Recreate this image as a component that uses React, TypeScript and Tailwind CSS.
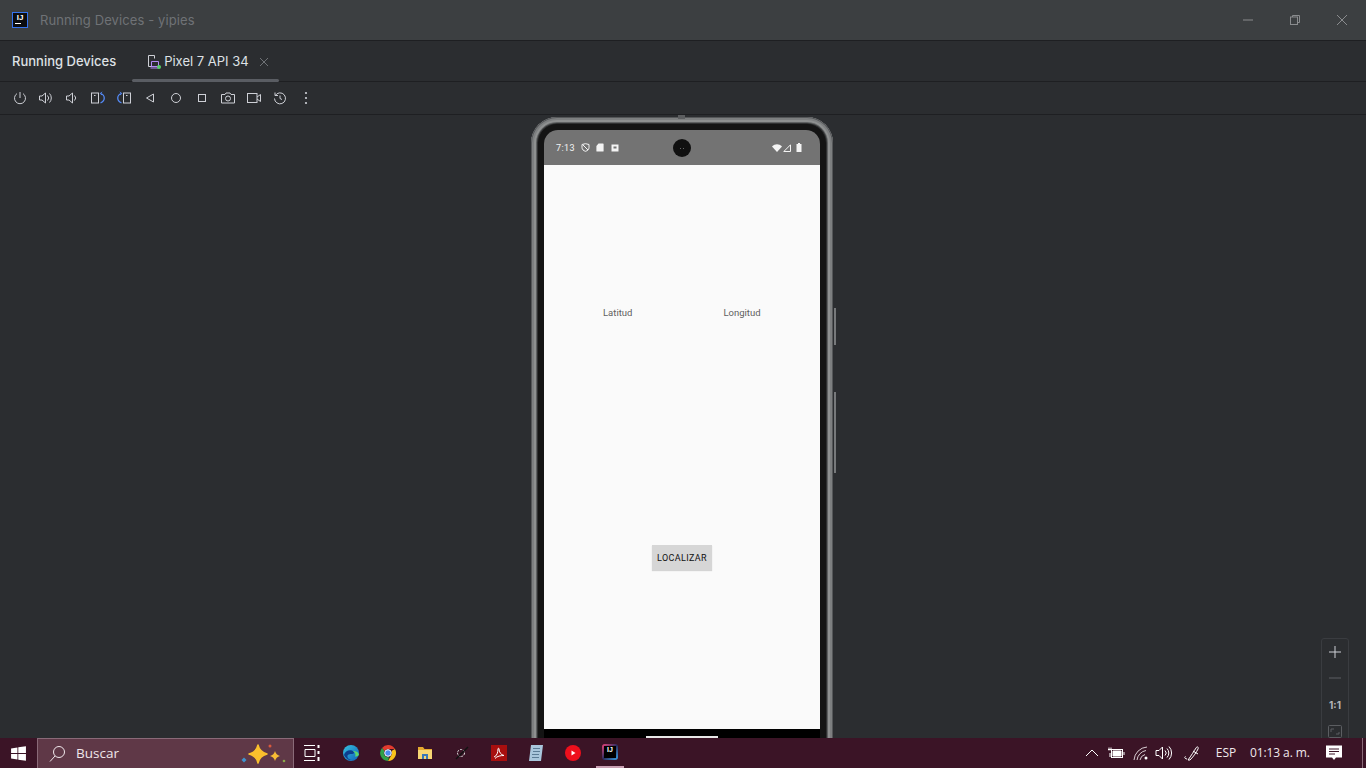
import React from "react";

const Ic = ({ children, w = 16, h = 16, c = "#ced0d6" }: { children: React.ReactNode; w?: number; h?: number; c?: string }) => (
  <svg width={w} height={h} viewBox={`0 0 ${w} ${h}`} fill="none" stroke={c} strokeWidth="1" className="shrink-0">
    {children}
  </svg>
);

const toolbar: React.ReactNode[] = [
  <Ic key="p"><path d="M8 2v6" /><path d="M5 3.600A5.500 5.500 0 1 0 11 3.600" /></Ic>,
  <Ic key="vu"><path d="M1.500 6h2.500L7.500 3v10L4 10H1.500z" /><path d="M9.500 5.500a3.500 3.500 0 0 1 0 5" /><path d="M11.500 3.500a6.500 6.500 0 0 1 0 9" /></Ic>,
  <Ic key="vd"><path d="M2.500 6h2.500L8.500 3v10L5 10H2.500z" /><path d="M10.500 5.500a3.500 3.500 0 0 1 0 5" /></Ic>,
  <Ic key="rl"><rect x="1.500" y="3" width="7" height="10" /><path d="M4 5.500h1.500" /><path d="M10.500 3.500c5 1.500 5 7.500 0 9.500" stroke="#548af7" strokeWidth="1.300" /><path d="M12 1.800 10.300 3.500 12 5" stroke="#548af7" /></Ic>,
  <Ic key="rr"><rect x="7.500" y="3" width="7" height="10" /><path d="M10 5.500h1.500" /><path d="M5.500 3.500c-5 1.500-5 7.500 0 9.500" stroke="#548af7" strokeWidth="1.300" /><path d="M4 1.800 5.700 3.500 4 5" stroke="#548af7" /></Ic>,
  <Ic key="b"><path d="M11.500 4v8L4.500 8z" /></Ic>,
  <Ic key="h"><circle cx="8" cy="8" r="4.500" /></Ic>,
  <Ic key="s"><rect x="4.500" y="4.500" width="7" height="7" /></Ic>,
  <Ic key="cam"><path d="M1.500 4.500h3.500l1-1.500h4l1 1.500h3.500v8.500h-13z" /><circle cx="8" cy="8.500" r="2.500" /></Ic>,
  <Ic key="vid"><rect x="1.500" y="3.500" width="9.500" height="9" /><path d="M11 7l3.500-2.500v7L11 9" /></Ic>,
  <Ic key="hist"><path d="M3.300 5.500A5.500 5.500 0 1 1 2.500 8.500" /><path d="M3 2.500v3h3" /><path d="M8 5.500V8.500l2 1" /></Ic>,
  <svg key="m" width="16" height="16" viewBox="0 0 16 16" fill="#ced0d6" className="shrink-0"><circle cx="8" cy="3" r="1.100" /><circle cx="8" cy="8" r="1.100" /><circle cx="8" cy="13" r="1.100" /></svg>,
];

const Win = () => (
  <svg width="17" height="17" viewBox="0 0 16 16" fill="#fff">
    <path d="M1 3.200 7 2.300v5.300H1zM7.800 2.200 15 1.100v6.500H7.800zM1 8.400h6v5.300l-6-.9zM7.800 8.400H15v6.500l-7.200-1.100z" />
  </svg>
);

const Edge = () => (
  <svg width="18" height="18" viewBox="0 0 18 18">
    <defs>
      <linearGradient id="eg" x1="0" y1="0" x2="1" y2="1"><stop offset="0" stopColor="#36c3e0" /><stop offset="1" stopColor="#1060b8" /></linearGradient>
    </defs>
    <circle cx="9" cy="9" r="8" fill="url(#eg)" />
    <path d="M2 11c1-5 7-6 9.500-3.500 1 1 .5 2.500-1.500 2.500-2 0-5 0-4.500 3 .3 2 3 3.500 6 2.800A8 8 0 0 1 2 11z" fill="#0c3f8e" />
    <path d="M11 7c2.500 0 5.500 1 6 3.500-.5 1.500-2 2-4 2 1-1.500.5-4-2-5.500z" fill="#5ed66a" />
  </svg>
);

const Chrome = () => (
  <svg width="16" height="16" viewBox="0 0 16 16">
    <path d="M8 0a8 8 0 0 1 6.930 4H8a4 4 0 0 0-3.500 2L2 2.900A8 8 0 0 1 8 0z" fill="#e33b2e" />
    <path d="M14.930 4A8 8 0 0 1 8 16l3.460-6A4 4 0 0 0 11.500 6z" fill="#f9c21a" />
    <path d="M8 16A8 8 0 0 1 2 2.900L4.500 6a4 4 0 0 0 4.500 6z" fill="#2fa24a" />
    <circle cx="8" cy="8" r="3.300" fill="#4a8cf0" stroke="#fff" strokeWidth="1" />
  </svg>
);

const Folder = () => (
  <svg width="16" height="16" viewBox="0 0 16 16">
    <path d="M1 2h5l1.500 2H15v2H1z" fill="#e5a92f" />
    <path d="M1 5h14v9H1z" fill="#f7d774" />
    <path d="M5 9h6v5H5z" fill="#3a78b8" />
    <path d="M7 11h2v3H7z" fill="#f7d774" />
  </svg>
);

const Spark = () => (
  <svg width="46" height="26" viewBox="0 0 46 26">
    <path d="M18 4Q19.500 11 27 13 19.500 15 18 22 16.500 15 9 13 16.500 11 18 4z" fill="#fbc02d" stroke="#fbc02d" strokeWidth="1.500" strokeLinejoin="round" />
    <path d="M35 10Q36 14 40 15 36 16 35 20 34 16 30 15 34 14 35 10z" fill="#f9bd35" />
    <path d="M4 16.500 6.500 19 4 21.500 1.500 19z" fill="#3f93d0" />
    <circle cx="30" cy="5" r="1.500" fill="#d9593d" />
    <circle cx="44" cy="20" r="1.300" fill="#8aa94a" />
  </svg>
);

export default function App() {
  return (
    <div className="flex h-[768px] w-[1366px] flex-col overflow-hidden bg-[#2b2d30] font-['Inter',sans-serif]">
      {/* title bar */}
      <div className="flex h-[41px] shrink-0 items-center border-b border-[#1e1f22] bg-[#3c3f41]">
        <div className="ml-3 flex h-4 w-4 flex-col items-center border border-[#3574f0] bg-[#0c0d10]">
          <span className="font-['Liberation_Sans',sans-serif] text-[8px] font-bold leading-[9px] text-white">IJ</span>
          <span className="ml-[-4px] mt-[1px] h-[1px] w-[6px] bg-white" />
        </div>
        <span className="ml-3 pt-[1px] text-[13px] tracking-[0.1px] text-[#6f7276]">Running Devices - yipies</span>
        <div className="ml-auto flex items-center">
          <svg width="12" height="12" viewBox="0 0 12 12" stroke="#8a8c8e" fill="none" className="mr-[35px]"><path d="M1 6h10" /></svg>
          <svg width="12" height="12" viewBox="0 0 12 12" stroke="#8a8c8e" fill="none" className="mr-[35px]"><rect x="1.500" y="3" width="7" height="7.500" /><path d="M3.500 3V1.500h7v7H8.500" /></svg>
          <svg width="12" height="12" viewBox="0 0 12 12" stroke="#8a8c8e" fill="none" className="mr-[18px]"><path d="M1 1l10 10M11 1 1 11" /></svg>
        </div>
      </div>

      {/* tab bar */}
      <div className="flex h-[41px] shrink-0 items-stretch border-b border-[#1e1f22] bg-[#2b2d30]">
        <div className="ml-3 flex items-center pt-[1px] text-[13px] font-medium text-[#dfe1e5]">Running Devices</div>
        <div className="relative ml-4 flex w-[147px] items-center pl-[14px] pt-[1px]">
          <svg width="16" height="16" viewBox="0 0 16 16" fill="none" className="shrink-0">
            <path d="M7 12.500H2.500v-11h6v3" stroke="#ced0d6" />
            <path d="M5.500 7.500h7v5h-7z" stroke="#b189f5" />
            <path d="M4.500 14h9" stroke="#b189f5" />
            <circle cx="13" cy="13" r="2" fill="#57d06a" />
          </svg>
          <span className="ml-[2px] text-[13px] text-[#dfe1e5]">Pixel 7 API 34</span>
          <svg width="10" height="10" viewBox="0 0 10 10" stroke="#6f7276" fill="none" className="ml-[10px]"><path d="M1 1l8 8M9 1 1 9" /></svg>
          <span className="absolute bottom-[-1px] left-0 right-0 h-[3px] rounded-sm bg-[#5a5d63]" />
        </div>
      </div>

      {/* toolbar */}
      <div className="flex h-[33px] shrink-0 items-center gap-[10px] border-b border-[#1e1f22] pl-3">
        {toolbar}
      </div>

      {/* device area */}
      <div className="relative flex min-h-0 flex-1 justify-center overflow-hidden bg-[#2b2d30] pt-[2px]">
        <div className="relative mr-[2px] h-[660px] w-[302px] shrink-0 rounded-t-[26px] bg-[#141414] px-[13px] pt-[13px] shadow-[inset_0_0_0_1px_#555759,inset_0_0_0_3px_#7d7f80,inset_0_0_0_5px_#8e9090,inset_0_0_0_6px_#5e6061,inset_0_0_0_7px_#2f3031]">
          <div className="absolute left-[147px] top-[-2px] h-[4px] w-[7px] bg-[#5c5e60]" />
          <div className="absolute right-[-3px] top-[191px] h-[37px] w-[2px] bg-[#77797b]" />
          <div className="absolute right-[-3px] top-[275px] h-[81px] w-[2px] bg-[#77797b]" />
          <div className="relative h-[620px] rounded-t-[14px] bg-black">
            <div className="relative flex h-[35px] items-center rounded-t-[14px] bg-[#737373] pl-[12px] pr-[18px]">
              <span className="mt-[3px] font-['Roboto',sans-serif] text-[9px] tracking-[0.4px] text-[#f4f4f4]">7:13</span>
              <svg width="9" height="9" viewBox="0 0 9 9" fill="none" stroke="#f4f4f4" className="ml-[6px]"><path d="M1 1.500 4.500.7 8 1.500v3c0 2-1.500 3.200-3.500 3.800C2.500 7.700 1 6.500 1 4.500z" /><path d="M2 2l5 5" /></svg>
              <svg width="8" height="9" viewBox="0 0 8 9" fill="#f4f4f4" className="ml-[6px]"><path d="M2.500.5H7a.6.6 0 0 1 .6.6V8a.6.6 0 0 1-.6.600H1A.6.6 0 0 1 .4 8V3z" /></svg>
              <svg width="8" height="8" viewBox="0 0 8 8" className="ml-[7px]"><path d="M.5.500h7v7H.5z" fill="#f4f4f4" /><path d="M2.500 2.500h3v2h-3z" fill="#737373" /></svg>
              <div className="absolute left-[129px] top-[9px] flex h-[18px] w-[18px] items-center justify-center gap-[2px] rounded-full bg-[#101010]">
                <span className="h-[1px] w-[1px] bg-[#666]" />
                <span className="h-[1px] w-[1px] bg-[#666]" />
              </div>
              <div className="ml-auto flex items-center gap-[1px]">
                <svg width="10" height="8" viewBox="0 0 10 8" fill="#f4f4f4"><path d="M0 2.500C3-.6 7-.6 10 2.500L5 8z" /></svg>
                <svg width="8" height="8" viewBox="0 0 8 8" fill="none" stroke="#f4f4f4"><path d="M7.500.8v6.700H.8z" /></svg>
                <svg width="6" height="9" viewBox="0 0 6 9" fill="#f4f4f4" className="ml-[4px]"><path d="M2 0h2v1h1.500v8h-5V1H2z" /></svg>
              </div>
            </div>
            <div className="h-[564px] bg-[#fafafa]">
              <div className="flex pt-[141px] font-['Roboto',sans-serif] text-[9.500px] leading-[14px] text-[#5f5f5f]">
                <span className="ml-[59px]">Latitud</span>
                <span className="ml-[91px]">Longitud</span>
              </div>
              <div className="mt-[225px] flex justify-center">
                <div className="flex h-[25px] w-[60px] items-center justify-center bg-[#d6d6d6] pt-[3px] font-['Roboto',sans-serif] text-[9px] font-normal tracking-[0.35px] text-[#111111] shadow-[0_1px_1px_rgba(0,0,0,0.15)]">
                  LOCALIZAR
                </div>
              </div>
            </div>
            <div className="absolute left-[102px] top-[606px] h-[2px] w-[72px] bg-[#e8e8e8]" />
          </div>
        </div>

        {/* zoom controls */}
        <div className="absolute bottom-[-6px] right-[17px] flex h-[106px] w-[28px] flex-col items-center rounded-[3px] border border-[#3a3c40] bg-[#2b2d30]">
          <svg width="14" height="14" viewBox="0 0 14 14" stroke="#ced0d6" fill="none" className="mt-[6px]"><path d="M7 1v12M1 7h12" /></svg>
          <svg width="14" height="14" viewBox="0 0 14 14" stroke="#5c5e62" fill="none" className="mt-[12px]"><path d="M1 7h12" /></svg>
          <span className="mt-[15px] text-[10px] font-bold leading-[11px] text-[#b4b6ba]">1:1</span>
          <svg width="14" height="14" viewBox="0 0 14 14" stroke="#5c5e62" fill="none" className="mt-[14px]"><rect x="0.500" y="0.500" width="13" height="12" rx="1" /><path d="M3 7V4h3M8 9h3V7" /></svg>
        </div>
      </div>

      {/* taskbar */}
      <div className="relative flex h-[30px] shrink-0 items-center bg-[#3b1426] font-['Open_Sans',sans-serif]">
        <div className="flex w-[37px] justify-center"><Win /></div>
        <div className="flex h-[30px] w-[257px] items-center border border-b-0 border-[#8a6a78] bg-[#5f3847]">
          <svg width="18" height="18" viewBox="0 0 18 18" stroke="#f1e8ec" fill="none" className="ml-[10px]"><circle cx="11" cy="7" r="5.500" /><path d="M7 11l-5 5.500" /></svg>
          <span className="ml-[10px] text-[13.500px] text-[#efe6ea]">Buscar</span>
          <div className="ml-auto mr-[7px] mt-[1px]"><Spark /></div>
        </div>
        <svg width="18" height="18" viewBox="0 0 18 18" stroke="#fff" fill="none" className="ml-[9px]"><path d="M1 1.500h11M1 16.500h11M2 5.500h10v7H2z" /><path d="M15.500 1v3M15.500 7v3M15.500 13v4" strokeWidth="2" /></svg>
        <div className="ml-[21px]"><Edge /></div>
        <div className="ml-[20px]"><Chrome /></div>
        <div className="ml-[21px]"><Folder /></div>
        <svg width="16" height="16" viewBox="0 0 16 16" fill="none" stroke="#e6e6e6" className="ml-[21px]"><circle cx="7" cy="8" r="3.500" strokeDasharray="2 1" /><path d="M2 14 14 2" stroke="#111" strokeWidth="1.500" /></svg>
        <div className="ml-[21px] flex h-4 w-4 items-center justify-center bg-[#a80f0f]">
          <svg width="12" height="12" viewBox="0 0 12 12" fill="none" stroke="#fff"><path d="M1 10c3-1 4-5 4-8 0-1 1-1 1 0 0 3 2 6 5 6.500-3 0-7 .5-9 3" /></svg>
        </div>
        <svg width="18" height="18" viewBox="0 0 18 18" className="ml-[20px]"><path d="M4 1h12l-2 16H2z" fill="#a9c6dc" /><path d="M6 4.500h7M6 7.500h7M5 10.500h7M5 13.500h7" stroke="#5c7c96" /></svg>
        <div className="ml-[20px] flex h-4 w-4 items-center justify-center rounded-full bg-[#ee0f1c]">
          <svg width="10" height="10" viewBox="0 0 10 10" fill="#fff"><path d="M3.500 2.500v5l4-2.500z" /></svg>
        </div>
        <div className="ml-[15px] flex h-[30px] w-[28px] items-center justify-center border-b-2 border-[#c9a0b3]">
          <div className="flex h-4 w-4 items-center justify-center rounded-[3px] bg-[linear-gradient(135deg,#f0447a,#2b2d60,#3ba5e8)]">
            <div className="flex h-[12px] w-[12px] items-start justify-center bg-black">
              <span className="font-['Liberation_Sans',sans-serif] text-[7px] font-bold leading-[8px] text-white">IJ</span>
            </div>
          </div>
        </div>

        <div className="ml-auto flex items-center text-[#f0e8ec]">
          <svg width="14" height="14" viewBox="0 0 14 14" stroke="#fff" fill="none"><path d="M1 10l6-6 6 6" /></svg>
          <svg width="18" height="14" viewBox="0 0 18 14" stroke="#fff" fill="none" className="ml-[8px]"><path d="M1 3.500h4M2 1.500v3M4 1.500v3M3 7v4" /><rect x="4.500" y="3.500" width="11" height="8" /><path d="M6 5h8v5H6z" fill="#fff" /><path d="M17 6v3" /></svg>
          <svg width="16" height="16" viewBox="0 0 16 16" stroke="#d9ced3" fill="none" className="ml-[8px]"><path d="M1 15A14 14 0 0 1 14 2M4 15a11 11 0 0 1 9-9.500M7 15a7 7 0 0 1 5-5.500" /><circle cx="13" cy="13" r="1.500" fill="#fff" stroke="none" /></svg>
          <svg width="17" height="16" viewBox="0 0 17 16" stroke="#fff" fill="none" className="ml-[6px]"><path d="M1 5.500h3L7.500 2v12L4 10.500H1z" /><path d="M10 5.500a3.500 3.500 0 0 1 0 5M12 3.500a6.500 6.500 0 0 1 0 9M14 1.500a9.500 9.500 0 0 1 0 13" /></svg>
          <svg width="18" height="18" viewBox="0 0 18 18" stroke="#fff" fill="none" className="ml-[11px]"><path d="M4 15C2 15 1 13 2.500 12.500M5 16c3-4 6-9 8-12 1-2 3-1 2 1-1.500 3-4 7-8 11zM10 7l5 3" /></svg>
          <span className="ml-[15px] text-[12px] tracking-[-0.1px] text-[#f0e8ec]">ESP</span>
          <span className="ml-[14px] w-[58px] whitespace-nowrap text-[12px] tracking-[-0.1px] text-[#f0e8ec]">01:13 a. m.</span>
          <svg width="16" height="16" viewBox="0 0 16 16" className="ml-[18px]"><path d="M0 .500h16v12H10l-2 2.500-2-2.500H0z" fill="#fff" /><path d="M3 4h10M3 6.500h10M3 9h6" stroke="#3b1426" /></svg>
          <span className="ml-[20px] mr-[3px] h-[30px] w-[1px] bg-[#8a6a78]" />
        </div>
      </div>
    </div>
  );
}
